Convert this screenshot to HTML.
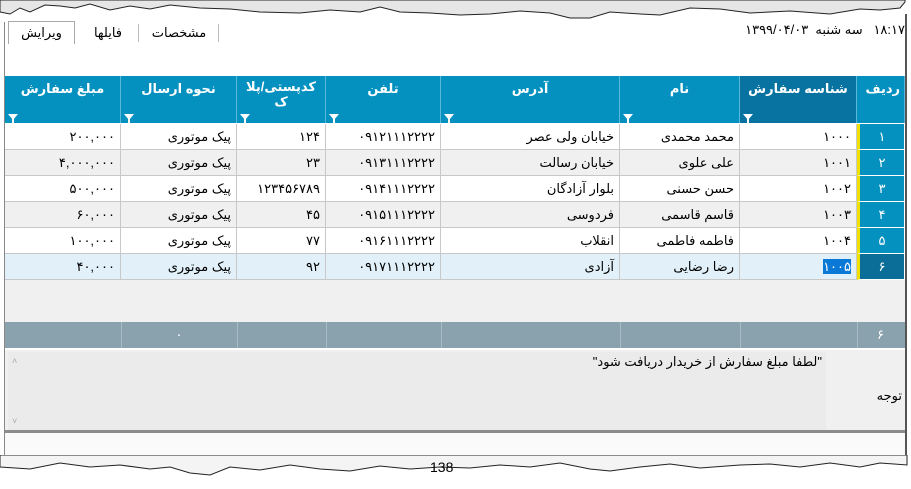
<!DOCTYPE html><html><head><meta charset="utf-8"><style>
body{margin:0;width:911px;height:489px;overflow:hidden;background:#fff;font-family:"Liberation Sans","DejaVu Sans",sans-serif;font-size:13px;position:relative}
.a{position:absolute}
.h{position:absolute;top:76px;height:47px;background:#0591c0;color:#fff;border-right:1px solid #5ab8d8;box-sizing:border-box;text-align:center;padding-top:5px;font-size:13px;font-weight:bold}
.f{position:absolute;bottom:3px;left:3px;width:0;height:0;border-left:5px solid transparent;border-right:5px solid transparent;border-top:6px solid #fff}
.f:after{content:"";position:absolute;left:-1px;top:-1px;width:2px;height:6px;background:#fff}
.c{position:absolute;height:26px;box-sizing:border-box;border-right:1px solid #c8c8c8;border-bottom:1px solid #c8c8c8;line-height:25px;padding:0 5px;text-align:right;direction:rtl;white-space:nowrap;overflow:hidden}
.n{position:absolute;left:857px;width:47px;height:26px;box-sizing:border-box;background:#0591c0;color:#fff;text-align:center;line-height:25px;border-bottom:1px solid #fff;border-left:3px solid #f0e000}
</style></head><body>
<svg class="a" style="left:0;top:0" width="911" height="26"><path d="M0,0 L905,0 L905,2 L900,8 L880,10 L860,9 L830,14 L790,11 L750,13 L720,9 L690,8 L660,15 L640,14 L610,12 L590,18 L570,18 L550,13 L520,11 L490,14 L460,15 L430,13 L400,12 L380,7 L360,12 L330,10 L300,13 L260,12 L230,9 L200,8 L170,5 L150,9 L130,6 L110,10 L90,4 L75,8 L60,6 L45,5 L30,12 L20,8 L10,14 L0,12 Z" fill="#e6e6e6" stroke="#222" stroke-width="1"/></svg>
<div class="a" style="left:8px;top:21px;width:65px;height:22px;border:1px solid #aaa;border-bottom:none;background:#fff;text-align:center;line-height:22px;direction:rtl">ویرایش</div>
<div class="a" style="left:78px;top:24px;width:60px;height:18px;text-align:center;line-height:18px;border-right:1px solid #bbb">فایلها</div>
<div class="a" style="left:140px;top:24px;width:78px;height:18px;text-align:center;line-height:18px;border-right:1px solid #bbb">مشخصات</div>
<div class="a" style="left:420px;top:22px;width:485px;text-align:right;direction:rtl;font-size:13px">۱۸:۱۷&nbsp;&nbsp; سه شنبه&nbsp; ۱۳۹۹/۰۴/۰۳</div>
<div class="a" style="left:905px;top:14px;width:2px;height:450px;background:#555"></div>
<div class="a" style="left:4px;top:22px;width:1px;height:436px;background:#888"></div>

<div class="h" style="left:5px;width:116px">مبلغ سفارش<div class="f"></div></div>
<div class="h" style="left:121px;width:116px">نحوه ارسال<div class="f"></div></div>
<div class="h" style="left:237px;width:89px;line-height:15px;padding-top:3px">کدپستی/پلا<br>ک<div class="f"></div></div>
<div class="h" style="left:326px;width:115px">تلفن<div class="f"></div></div>
<div class="h" style="left:441px;width:179px">آدرس<div class="f"></div></div>
<div class="h" style="left:620px;width:120px">نام<div class="f"></div></div>
<div class="h" style="left:740px;width:117px;background:#0872a0">شناسه سفارش<div class="f"></div></div>
<div class="h" style="left:857px;width:48px;text-align:right;padding-right:4px">ردیف</div>

<div id="rows"></div>
<script>
var d=[["۲۰۰,۰۰۰","پیک موتوری","۱۲۴","۰۹۱۲۱۱۱۲۲۲۲","خیابان ولی عصر","محمد محمدی","۱۰۰۰","۱"],
["۴,۰۰۰,۰۰۰","پیک موتوری","۲۳","۰۹۱۳۱۱۱۲۲۲۲","خیابان رسالت","علی علوی","۱۰۰۱","۲"],
["۵۰۰,۰۰۰","پیک موتوری","۱۲۳۴۵۶۷۸۹","۰۹۱۴۱۱۱۲۲۲۲","بلوار آزادگان","حسن حسنی","۱۰۰۲","۳"],
["۶۰,۰۰۰","پیک موتوری","۴۵","۰۹۱۵۱۱۱۲۲۲۲","فردوسی","قاسم قاسمی","۱۰۰۳","۴"],
["۱۰۰,۰۰۰","پیک موتوری","۷۷","۰۹۱۶۱۱۱۲۲۲۲","انقلاب","فاطمه فاطمی","۱۰۰۴","۵"],
["۴۰,۰۰۰","پیک موتوری","۹۲","۰۹۱۷۱۱۱۲۲۲۲","آزادی","رضا رضایی","۱۰۰۵","۶"]];
var x=[5,121,237,326,441,620,740,857],h="";
d.forEach(function(r,i){var y=124+i*26,bg=i==5?"#e2f1f9":(i%2?"#f0f0f0":"#fff");
for(var j=0;j<7;j++){var t=r[j];if(i==5&&j==6)t='<span style="background:#0a78d7;color:#fff">'+t+'</span>';
h+='<div class="c" style="left:'+x[j]+'px;top:'+y+'px;width:'+(x[j+1]-x[j])+'px;background:'+bg+'">'+t+'</div>';}
h+='<div class="n" style="top:'+y+'px;'+(i==5?'background:#0a6e99':'')+'">'+r[7]+'</div>';});
document.getElementById("rows").innerHTML=h;
</script>
<div class="a" style="left:5px;top:280px;width:900px;height:42px;background:#f0f0f0"></div>
<div class="a" style="left:5px;top:322px;width:900px;height:26px;background:#8aa2ae"></div>
<div class="a" style="left:121px;top:322px;width:1px;height:26px;background:#a9bcc5;box-shadow:116px 0 #a9bcc5,205px 0 #a9bcc5,320px 0 #a9bcc5,499px 0 #a9bcc5,619px 0 #a9bcc5,736px 0 #a9bcc5"></div>
<div class="a" style="left:121px;top:322px;width:116px;line-height:26px;text-align:center;color:#fff">۰</div>
<div class="a" style="left:857px;top:322px;width:47px;line-height:26px;text-align:center;color:#fff">۶</div>
<div class="a" style="left:5px;top:350px;width:900px;height:82px;background:#f0f0f0"></div>
<div class="a" style="left:8px;top:352px;width:818px;height:80px;background:#ebebeb"></div>
<div class="a" style="left:200px;top:354px;width:622px;text-align:right;direction:rtl;font-size:13px">"لطفا مبلغ سفارش از خریدار دریافت شود"</div>
<div class="a" style="left:12px;top:356px;color:#aaa;font-size:9px">˄</div>
<div class="a" style="left:12px;top:416px;color:#aaa;font-size:9px">˅</div>
<div class="a" style="left:840px;top:388px;width:62px;text-align:right;font-size:13px">توجه</div>
<div class="a" style="left:5px;top:430px;width:900px;height:3px;background:#8c8c8c"></div>
<div class="a" style="left:5px;top:433px;width:900px;height:25px;background:#fafafa"></div>
<svg class="a" style="left:0;top:455px" width="911" height="34"><path d="M0,0 L907,0 L907,10 L880,8 L860,12 L830,8 L800,12 L770,9 L740,10 L700,13 L670,9 L640,12 L610,16 L590,14 L560,8 L530,12 L500,10 L470,13 L440,12 L410,14 L380,11 L350,16 L320,14 L290,10 L260,15 L230,12 L210,20 L190,18 L170,12 L150,14 L120,10 L90,12 L60,8 L30,14 L0,12 Z" fill="#f4f4f4" stroke="#222"/></svg>
<div class="a" style="left:430px;top:459px;font-size:14px">138</div>
</body></html>
